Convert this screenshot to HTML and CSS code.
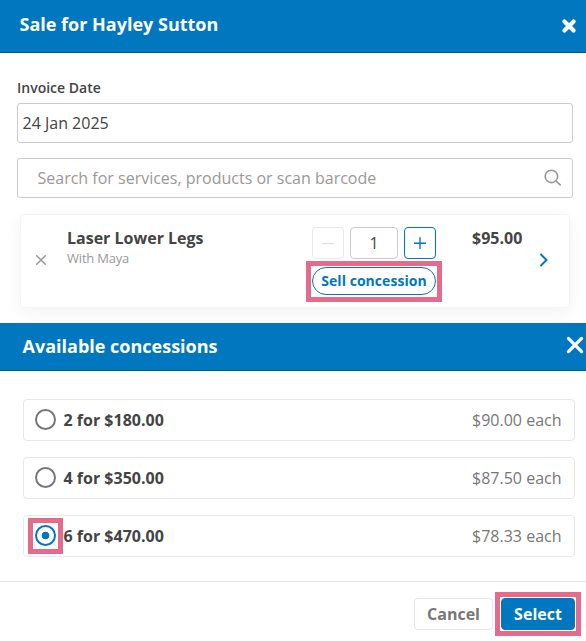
FILE: index.html
```html
<!DOCTYPE html>
<html lang="en">
<head>
    <meta charset="UTF-8">
    <meta name="viewport" content="width=device-width, initial-scale=1.0">
    <title>Sale for Hayley Sutton</title>
    <link rel="stylesheet" href="styles.css">
</head>
<body>
    <!-- Sale -->
    <header class="sale-header">
        <h1>Sale for Hayley Sutton</h1>
        <button class="close-btn" aria-label="Close">
            <svg width="16" height="16" viewBox="0 0 16 16"><path d="M3.4 3.4l9.2 9.2M12.6 3.4l-9.2 9.2" stroke="#fff" stroke-width="4.2" stroke-linecap="round"/></svg>
        </button>
    </header>

    <main class="sale">
        <label class="label" for="invoiceDate">Invoice Date</label>
        <input class="field" id="invoiceDate" type="text" value="24 Jan 2025">

        <div class="search">
            <input class="field search-input" type="text" placeholder="Search for services, products or scan barcode">
            <svg class="search-icon" width="18" height="18" viewBox="0 0 18 18" fill="none" stroke="#999" stroke-width="1.6"><circle cx="7.4" cy="7.4" r="6.2"/><path d="M11.8 11.8l4.9 4.6"/></svg>
        </div>

        <div class="item">
            <button class="remove" aria-label="Remove">
                <svg width="12" height="12" viewBox="0 0 12 12" fill="none" stroke="#999" stroke-width="1.5"><path d="M1.2 1.2l9.6 9.6M10.8 1.2L1.2 10.8"/></svg>
            </button>
            <div class="item-info">
                <h3>Laser Lower Legs</h3>
                <p>With Maya</p>
            </div>
            <div class="item-qty">
                <div class="stepper">
                    <button class="step step-off" aria-label="Less">
                        <svg width="12" height="12" viewBox="0 0 12 12" stroke="#ddd"><path d="M0 6.5h12"/></svg>
                    </button>
                    <input class="qty" type="text" value="1">
                    <button class="step" aria-label="More">
                        <svg width="12" height="12" viewBox="0 0 12 12" stroke="#0077be" stroke-width="1.4"><path d="M0 6.3h12M6 .3v12"/></svg>
                    </button>
                </div>
                <button class="sell marked">Sell concession</button>
            </div>
            <div class="item-price">$95.00</div>
            <svg class="chevron" width="10" height="14" viewBox="0 0 10 14" fill="none" stroke="#0077be" stroke-width="2"><path d="M1.5 1l6 6-6 6"/></svg>
        </div>
    </main>

    <!-- Concessions -->
    <header class="concession-header">
        <h2>Available concessions</h2>
        <button class="close-btn" aria-label="Close">
            <svg width="18" height="18" viewBox="0 0 18 18"><path d="M2.4 2.4l13.2 13.2M15.6 2.4L2.4 15.6" stroke="#fff" stroke-width="3.2" stroke-linecap="round"/></svg>
        </button>
    </header>

    <div class="options">
        <label class="option">
            <input class="radio" type="radio" name="concession">
            <span class="option-name">2 for $180.00</span>
            <span class="option-each">$90.00 each</span>
        </label>
        <label class="option">
            <input class="radio" type="radio" name="concession">
            <span class="option-name">4 for $350.00</span>
            <span class="option-each">$87.50 each</span>
        </label>
        <label class="option">
            <span class="radio-wrap marked"><input class="radio" type="radio" name="concession" checked></span>
            <span class="option-name">6 for $470.00</span>
            <span class="option-each">$78.33 each</span>
        </label>
    </div>

    <footer class="footer">
        <button class="btn">Cancel</button>
        <button class="btn btn-primary marked">Select</button>
    </footer>
</body>
</html>
```
FILE: styles.css
```css
* {
    box-sizing: border-box;
}

body {
    min-height: 641px;
    margin: 0;
    font-family: 'Open Sans', sans-serif;
    font-size: 16px;
    color: #444;
    background: #fff;
}

h1, h2, h3, p {
    margin: 0;
}

button, input {
    font-family: inherit;
    color: inherit;
}

button {
    padding: 0;
    background: none;
    border: none;
    cursor: pointer;
}

svg {
    display: block;
    flex: none;
}

/* Headers */
.sale-header,
.concession-header {
    display: flex;
    align-items: center;
    justify-content: space-between;
    background: #0077be;
    border-bottom: 1px solid #005a91;
    color: #fff;
}

.sale-header {
    height: 53px;
    padding: 0 9px 5px 19.5px;
}

.concession-header {
    height: 48px;
    padding: 0 2px 2px 22.5px;
}

.sale-header h1,
.concession-header h2 {
    font-size: 18px;
    line-height: 24px;
    font-weight: 700;
}

.sale-header .close-btn {
    margin-top: 5px;
}

.concession-header .close-btn {
    margin-bottom: 2px;
}

/* Sale form */
.sale {
    height: 270px;
    padding: 25px 13px 0 17px;
}

.label {
    display: block;
    height: 25px;
    font-size: 14px;
    line-height: 20px;
    font-weight: 600;
}

.field {
    display: block;
    width: 100%;
    height: 40px;
    padding: 0 4.5px;
    border: 1px solid #ccc;
    border-radius: 3px;
    background: #fff;
    font-size: 16px;
    outline: none;
}

.search {
    display: flex;
    align-items: center;
    margin-top: 15px;
}

.search-input {
    padding-left: 19.5px;
}

.search-input::placeholder {
    color: #999;
    opacity: 1;
}

.search-icon {
    margin-left: -29px;
    margin-right: 11px;
}

/* Item card */
.item {
    display: flex;
    height: 94px;
    margin: 16px 3px 0 3px;
    padding: 13px 20px 0 14px;
    border: 1px solid #f4f4f6;
    border-radius: 4px;
    box-shadow: 0 4px 16px rgba(40, 40, 90, 0.06);
}

.remove {
    height: 12px;
    margin-top: 26px;
}

.item-info {
    width: 245px;
    margin-left: 20px;
}

.item-info h3,
.item-price {
    font-size: 16px;
    line-height: 20px;
    font-weight: 700;
}

.item-info p {
    font-size: 13px;
    line-height: 20px;
    letter-spacing: -0.2px;
    color: #999;
}

.item-qty {
    width: 124px;
    margin-top: -1px;
}

.stepper {
    display: flex;
    justify-content: space-between;
}

.step {
    display: flex;
    align-items: center;
    justify-content: center;
    width: 32px;
    height: 32px;
    border: 1px solid #0077be;
    border-radius: 4px;
}

.step-off {
    border-color: #e8e8e8;
}

.qty {
    width: 48px;
    height: 32px;
    padding: 0;
    border: 1px solid #ccc;
    border-radius: 4px;
    font-size: 16px;
    text-align: center;
}

.sell {
    width: 124px;
    height: 28px;
    margin-top: 8px;
    padding-bottom: 1px;
    border: 1px solid #0077be;
    border-radius: 14px;
    font-size: 14px;
    font-weight: 700;
    letter-spacing: 0.05px;
    color: #0077be;
}

.item-price {
    width: 67px;
    margin-left: 36px;
}

.chevron {
    margin-top: 25px;
}

/* Pink callout frames */
.marked {
    position: relative;
}

.marked::after {
    content: '';
    position: absolute;
    border: 5px solid #e56b8c;
    pointer-events: none;
}

.sell::after {
    inset: -7px -7px -8px;
}

.radio-wrap::after {
    inset: -7px -7px -8px;
}

.btn-primary::after {
    inset: -7px;
}

/* Concession options */
.options {
    display: flex;
    flex-direction: column;
    gap: 16px;
    padding: 28px 11px 24px 23px;
    border-bottom: 1px solid #e5e5e5;
}

.option {
    display: flex;
    align-items: center;
    height: 42px;
    padding: 0 12.5px 0 11px;
    border: 1px solid #e8e8e8;
    border-radius: 4px;
}

.radio {
    display: block;
    appearance: none;
    width: 21px;
    height: 21px;
    margin: -1px 0 0;
    border: 2px solid #777;
    border-radius: 50%;
}

.radio-wrap .radio {
    margin: 0;
}

.radio-wrap {
    margin-top: -1px;
}

.radio:checked {
    border-color: #0077be;
    background: radial-gradient(circle, #0077be 3.5px, #fff 4.2px);
}

.option-name {
    margin-left: 7.5px;
    font-weight: 700;
}

.option-each {
    margin-left: auto;
    color: #777;
}

/* Footer */
.footer {
    display: flex;
    justify-content: flex-end;
    gap: 8px;
    padding: 16px 11px 0;
}

.btn {
    width: 79px;
    height: 32px;
    border: 1px solid #e8e8e8;
    border-radius: 4px;
    font-size: 16px;
    font-weight: 700;
    color: #777;
}

.btn-primary {
    width: 74px;
    border-color: #0077be;
    background: #0077be;
    color: #fff;
}

.btn-primary::after {
    inset: -7px -7px -7px -7px;
}
```
